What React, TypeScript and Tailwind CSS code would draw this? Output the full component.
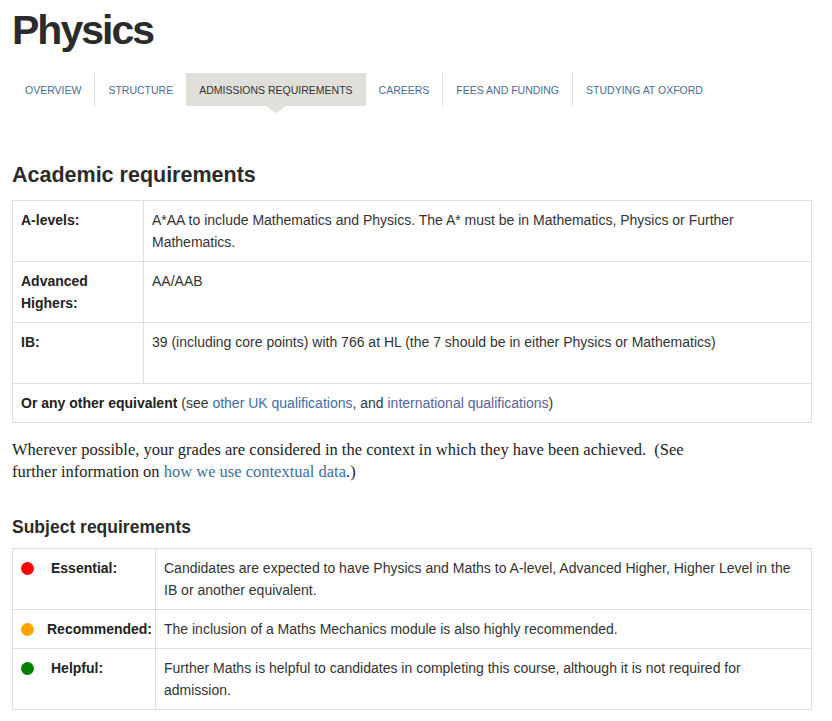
import React from "react";

const tabs = [
  "Overview",
  "Structure",
  "Admissions requirements",
  "Careers",
  "Fees and funding",
  "Studying at Oxford",
];
const active = 2;

const sans = "font-['Liberation_Sans',Arial,sans-serif]";

function AcademicRow({ label, children, tall }: { label: string; children: React.ReactNode; tall?: boolean }) {
  return (
    <div className="flex border-b border-[#dddddd] last:border-b-0">
      <div className={`w-[131px] shrink-0 border-r border-[#dddddd] px-2 py-2 font-bold text-[#222]${tall ? " min-h-[60px]" : ""}`}>
        {label}
      </div>
      <div className={`flex-1 px-2 py-2${tall ? " min-h-[60px]" : ""}`}>{children}</div>
    </div>
  );
}

function SubjectRow({ color, label, gap, children }: { color: string; label: string; gap: string; children: React.ReactNode }) {
  return (
    <div className="flex border-b border-[#dddddd] last:border-b-0">
      <div className="flex w-[143px] shrink-0 items-start border-r border-[#dddddd] px-2 py-2">
        <span className={`mt-[4.5px] h-[13px] w-[13px] shrink-0 rounded-full ${color}`} />
        <span className={`${gap} whitespace-nowrap font-bold text-[#222]`}>{label}</span>
      </div>
      <div className="flex-1 px-2 py-2">{children}</div>
    </div>
  );
}

export default function App() {
  return (
    <div className={`min-h-[721px] bg-white pl-3 pr-[20px] pt-[9px] text-[14px] leading-[22px] text-[#333] ${sans}`}>
      <h1 className="text-[41px] leading-[42px] font-bold tracking-[-2px] text-[#2b2b2b]">Physics</h1>

      {/* tabs */}
      <nav className="mt-[22px] flex text-[10.5px] uppercase">
        {tabs.map((t, i) => {
          const sep = i > 0 && i !== active && i !== active + 1;
          return (
            <div key={t} className="relative">
              <div
                className={`flex h-[33px] items-center px-[13px] ${i === active ? "bg-[#e0dfd9] text-[#333]" : "text-[#4a6d93]"} ${sep ? "border-l border-[#dddddd]" : ""}`}
              >
                {t}
              </div>
              {i === active && (
                <div className="absolute left-1/2 top-[33px] h-0 w-0 -translate-x-1/2 border-x-[10px] border-t-[7px] border-x-transparent border-t-[#e0dfd9]" />
              )}
            </div>
          );
        })}
      </nav>

      <h2 className="mt-[55px] text-[21.5px] leading-[28px] font-bold text-[#2b2b2b]">Academic requirements</h2>
      <div className="mt-[11px] border border-[#dddddd]">
        <AcademicRow label="A-levels:">
          A*AA to include Mathematics and Physics. The A* must be in Mathematics, Physics or Further Mathematics.
        </AcademicRow>
        <AcademicRow label="Advanced Highers:">AA/AAB</AcademicRow>
        <AcademicRow label="IB:" tall>
          39 (including core points) with 766 at HL (the 7 should be in either Physics or Mathematics)
        </AcademicRow>
        <div className="px-2 py-2">
          <span className="font-bold text-[#222]">Or any other equivalent</span> (see{" "}
          <a className="text-[#3b6ea5]">other UK qualifications</a>, and{" "}
          <a className="text-[#5b5f9f]">international qualifications</a>)
        </div>
      </div>

      <p className="mt-4 max-w-[690px] font-['Liberation_Serif','Times_New_Roman',serif] text-[16.5px] leading-[22px] text-[#222]">
        Wherever possible, your grades are considered in the context in which they have been achieved.&nbsp; (See
        further information on <a className="text-[#3b6ea5]">how we use contextual data</a>.)
      </p>

      <h2 className="mt-8 text-[17.5px] leading-[24px] font-bold text-[#2b2b2b]">Subject requirements</h2>
      <div className="mt-[9px] border border-[#dddddd]">
        <SubjectRow color="bg-[#ff0000]" label="Essential:" gap="ml-[17px]">
          Candidates are expected to have Physics and Maths to A-level, Advanced Higher, Higher Level in the IB or
          another equivalent.
        </SubjectRow>
        <SubjectRow color="bg-[#ffa500]" label="Recommended:" gap="ml-[13px]">
          The inclusion of a Maths Mechanics module is also highly recommended.
        </SubjectRow>
        <SubjectRow color="bg-[#008000]" label="Helpful:" gap="ml-[17px]">
          Further Maths is helpful to candidates in completing this course, although it is not required for admission.
        </SubjectRow>
      </div>
    </div>
  );
}
